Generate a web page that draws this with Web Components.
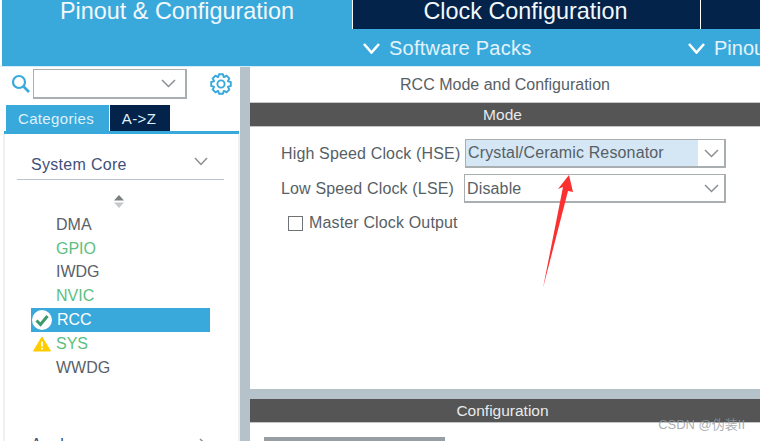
<!DOCTYPE html>
<html>
<head>
<meta charset="utf-8">
<style>
  html, body { margin: 0; padding: 0; background: #fff; }
  body { width: 760px; height: 441px; overflow: hidden; position: relative; font-family: "Liberation Sans", Arial, sans-serif; }
</style>
</head>
<body>
<cube-app></cube-app>
<script>
// small helper, every element just sets its own shadow markup
function shadow(el, html) {
    el.attachShadow({ mode: 'open' }).innerHTML = html;
}

const chevron = (w, h, color, sw) => `<svg width="${w}" height="${h}" viewBox="0 0 ${w} ${h}" style="display:block"><path d="M1 1 L${w / 2} ${h - 1.5} L${w - 1} 1" fill="none" stroke="${color}" stroke-width="${sw}"/></svg>`;

// outline of an 8 tooth gear, centre 11,11
function gearPath() {
    let d = '';
    for (let i = 0; i < 8; i++) {
        const a = i * Math.PI / 4;
        const pts = [[7.6, -0.36], [10, -0.2], [10, 0.2], [7.6, 0.36]];
        pts.forEach(([r, o]) => {
            d += (d ? 'L' : 'M') + (11 + r * Math.sin(a + o)).toFixed(2) + ' ' + (11 - r * Math.cos(a + o)).toFixed(2) + ' ';
        });
    }
    return d + 'Z';
}

class CubeTabs extends HTMLElement {
    constructor() {
        super();
        shadow(this, `
            <style>
                :host { display: flex; height: 29px; margin-left: 2px; background: #03234b; color: #f4f8fb; font-size: 23.4px; line-height: 22px; overflow: hidden; }
                div { display: flex; justify-content: center; align-items: center; height: 29px; padding-bottom: 7px; box-sizing: border-box; white-space: nowrap; }
                .a { width: 350px; background: #39a9dc; }
                .b { width: 345px; border-left: 1px solid #fff; border-right: 1px solid #fff; box-sizing: content-box; height: 22px; padding-right: 2px; }
                .c { flex: 1; }
            </style>
            <div class="a">Pinout &amp; Configuration</div>
            <div class="b">Clock Configuration</div>
            <div class="c"></div>`);
    }
}

class CubeSubbar extends HTMLElement {
    constructor() {
        super();
        shadow(this, `
            <style>
                :host { display: flex; height: 37px; margin-left: 2px; background: #39a9dc; color: #e4f3fb; font-size: 20px; align-items: center; overflow: hidden; padding: 1px 0 0 361px; box-sizing: border-box; white-space: nowrap; }
                svg { flex: none; margin-right: 9px; }
                span { display: block; }
                .pk { width: 299px; flex: none; letter-spacing: .25px; }
            </style>
            ${chevron(17, 11, '#fff', 2.6)}<span class="pk">Software Packs</span>
            ${chevron(17, 11, '#fff', 2.6)}<span>Pinout</span>`);
    }
}

class CubeSelect extends HTMLElement {
    constructor() {
        super();
        shadow(this, `
            <style>
                :host { display: flex; box-sizing: border-box; height: 29px; background: #fff; border: 1px solid #a9aeb1; border-width: 1px 2px 2px 1px; font-size: 16px; color: #575f66; align-items: center; }
                .t { flex: 1; height: 100%; display: flex; align-items: center; padding: 1px 0 0 2px; box-sizing: border-box; white-space: nowrap; letter-spacing: .15px; }
                :host([hl]) .t { background: #d5e6f4; padding-top: 0; }
                .c { flex: none; width: 26px; display: flex; justify-content: center; }
            </style>
            <div class="t"><slot></slot></div>
            <div class="c">${chevron(15, 9, '#8b8f92', 1.5)}</div>`);
    }
}

class CubeItem extends HTMLElement {
    constructor() {
        super();
        shadow(this, `
            <style>
                :host { display: flex; align-items: center; height: 23.8px; width: 179px; padding-left: 25px; box-sizing: border-box; margin-left: 31px; font-size: 16px; color: #5a5f68; position: relative; }
                :host([ok]) { color: #5cbf7f; }
                :host([sel]) { background: #39a9dc; color: #fff; padding-left: 26px; }
                ::slotted(svg) { position: absolute; left: 1px; top: 2px; }
            </style>
            <slot name="icon"></slot><slot></slot>`);
    }
}

class CubeSidebar extends HTMLElement {
    constructor() {
        super();
        shadow(this, `
            <style>
                :host { display: block; width: 240px; flex: none; background: #fff; overflow: hidden; }
                .search { display: flex; align-items: center; height: 33px; padding: 1px 0 0 11px; box-sizing: border-box; }
                .box { width: 154px; height: 30px; margin-left: 2px; box-sizing: border-box; border: 1px solid #a9aeb1; border-width: 1px 2px 2px 1px; display: flex; align-items: center; justify-content: flex-end; padding-right: 9px; }
                .gear { margin-left: 23px; margin-top: -1px; }
                .tabs { display: flex; height: 26px; margin: 5px 0 0 6px; font-size: 15px; letter-spacing: .35px; }
                .tabs div { display: flex; align-items: center; justify-content: center; height: 100%; color: #dff1fa; }
                .t1 { width: 103px; background: #39a9dc; padding-right: 3px; box-sizing: border-box; }
                .t2 { width: 60px; background: #03234b; margin-left: 1px; padding-right: 2px; box-sizing: border-box; }
                .rule { height: 3px; margin-left: 4px; width: 235px; background: #39a9dc; }
                .body { margin-left: 3px; width: 233px; height: 307px; border-left: 2px solid #eef1f3; border-right: 4px solid #eef1f3; overflow: hidden; }
                .inner { margin-left: -5px; width: 240px; }
                .cat { display: flex; align-items: center; justify-content: space-between; margin: 13px 0 0 17px; width: 207px; height: 33px; box-sizing: border-box; border-bottom: 1px solid #b8c4d4; font-size: 16px; color: #3f4f7a; padding: 4px 16px 0 14px; letter-spacing: .3px; }
                .cat svg { margin-top: -7px; }
                .sort { display: flex; justify-content: center; width: 238px; margin: 14px 0 4px; }
                .an { margin-top: 47px; }
            </style>
            <div class="search">
                <svg width="20" height="20" viewBox="0 0 20 20"><circle cx="8" cy="8" r="6" fill="none" stroke="#39a9dc" stroke-width="2.2"/><path d="M12.5 12.5 L18 18" stroke="#39a9dc" stroke-width="2.6" fill="none"/></svg>
                <div class="box">${chevron(15, 9, '#8b8f92', 1.5)}</div>
                <svg class="gear" width="22" height="22" viewBox="0 0 22 22" fill="none" stroke="#39a9dc" stroke-width="1.9" stroke-linejoin="round"><circle cx="11" cy="11" r="3.6"/><path d="${gearPath()}"/></svg>
            </div>
            <div class="tabs"><div class="t1">Categories</div><div class="t2">A-&gt;Z</div></div>
            <div class="rule"></div>
            <div class="body"><div class="inner">
                <div class="cat"><span>System Core</span>${chevron(14, 9, '#8b8f92', 1.5)}</div>
                <div class="sort"><svg width="12" height="15" viewBox="0 0 12 15"><path d="M6 1 L11 6.5 H1 Z" fill="#7b7f82"/><path d="M6 14 L11 8.5 H1 Z" fill="#c6c9cb"/></svg></div>
                <slot></slot>
                <div class="cat an" style="border:0"><span>Analog</span><svg width="9" height="14" viewBox="0 0 9 14" style="margin:0"><path d="M1 1 L7.5 7 L1 13" fill="none" stroke="#8b8f92" stroke-width="1.5"/></svg></div>
            </div></div>`);
    }
}

class CubeMain extends HTMLElement {
    constructor() {
        super();
        shadow(this, `
            <style>
                :host { display: flex; flex-direction: column; flex: 1; min-width: 0; border-left: 10px solid #b6c2c9; background: #fff; color: #575f66; }
                .title { height: 36px; display: flex; align-items: center; justify-content: center; font-size: 16px; padding-top: 1px; box-sizing: border-box; border-bottom: 1px solid #c8c9c9; }
                .bar { height: 23px; background: #545554; color: #e8eaec; font-size: 15.5px; display: flex; align-items: center; justify-content: center; flex: none; padding-right: 5px; }
                .line { height: 1px; background: #c2c4c5; flex: none; }
                .form { height: 262px; flex: none; box-sizing: border-box; padding: 12px 0 0 31px; font-size: 16px; letter-spacing: .15px; }
                .row { display: flex; align-items: center; height: 29px; margin-bottom: 6px; white-space: nowrap; }
                .row .l { flex: none; }
                .hse .l { width: 184px; }
                .lse .l { width: 183px; }
                .row cube-select { width: 261px; }
                .lse cube-select { width: 262px; }
                .chk { display: flex; align-items: center; margin: 8px 0 0 7px; height: 24px; }
                .chk i { width: 13px; height: 13px; border: 1px solid #6f7375; margin-right: 6px; flex: none; }
                .split { height: 10px; background: #b6c2c9; flex: none; }
                .bottom { flex: 1; padding: 14px 0 0 14px; overflow: hidden; }
                .bottom div { width: 181px; height: 10px; background: #979fa4; }
            </style>
            <div class="title">RCC Mode and Configuration</div>
            <div class="bar">Mode</div>
            <div class="line"></div>
            <div class="form">
                <div class="row hse"><span class="l">High Speed Clock (HSE)</span><cube-select hl>Crystal/Ceramic Resonator</cube-select></div>
                <div class="row lse"><span class="l">Low Speed Clock (LSE)</span><cube-select>Disable</cube-select></div>
                <div class="chk"><i></i>Master Clock Output</div>
            </div>
            <div class="split"></div>
            <div class="bar">Configuration</div>
            <div class="line"></div>
            <div class="bottom"><div></div></div>`);
    }
}

class CubeApp extends HTMLElement {
    constructor() {
        super();
        shadow(this, `
            <style>
                :host { display: flex; flex-direction: column; width: 760px; height: 441px; overflow: hidden; }
                .sep { height: 1px; background: #d5edf8; flex: none; }
                .content { display: flex; flex: 1; min-height: 0; }
                .arrow { position: absolute; left: 0; top: 0; pointer-events: none; }
                .mark { position: absolute; right: 15px; top: 414px; font: 13px "Liberation Sans", "Noto Sans CJK SC", sans-serif; color: rgba(150,155,160,.8); white-space: nowrap; }
            </style>
            <cube-tabs></cube-tabs>
            <cube-subbar></cube-subbar>
            <div class="sep"></div>
            <div class="content">
                <cube-sidebar>
                    <cube-item>DMA</cube-item>
                    <cube-item ok>GPIO</cube-item>
                    <cube-item>IWDG</cube-item>
                    <cube-item ok>NVIC</cube-item>
                    <cube-item sel>
                        <svg slot="icon" width="20" height="20" viewBox="0 0 20 20"><circle cx="10" cy="10" r="10" fill="#fff"/><path d="M4.5 10.5 L8.5 14.5 L15.5 6" fill="none" stroke="#3d9a6c" stroke-width="3"/></svg>
                        RCC
                    </cube-item>
                    <cube-item ok>
                        <svg slot="icon" width="18" height="16" viewBox="0 0 18 16" style="left:2px;top:4px"><path d="M9 1 L17.5 15 H.5 Z" fill="#ffcc00" stroke="#ffcc00" stroke-linejoin="round"/><path d="M9 5.5 V10.5 M9 11.8 V13.5" stroke="#fff" stroke-width="1.7"/></svg>
                        SYS
                    </cube-item>
                    <cube-item>WWDG</cube-item>
                </cube-sidebar>
                <cube-main></cube-main>
            </div>
            <svg class="arrow" width="760" height="441"><path d="M569 175 L573 192 L568 191 L543 288 L563 187 L558 189 Z" fill="#fb3030"/></svg>
            <div class="mark">CSDN @伪装II</div>`);
    }
}

customElements.define('cube-tabs', CubeTabs);
customElements.define('cube-subbar', CubeSubbar);
customElements.define('cube-select', CubeSelect);
customElements.define('cube-item', CubeItem);
customElements.define('cube-sidebar', CubeSidebar);
customElements.define('cube-main', CubeMain);
customElements.define('cube-app', CubeApp);
</script>
</body>
</html>
